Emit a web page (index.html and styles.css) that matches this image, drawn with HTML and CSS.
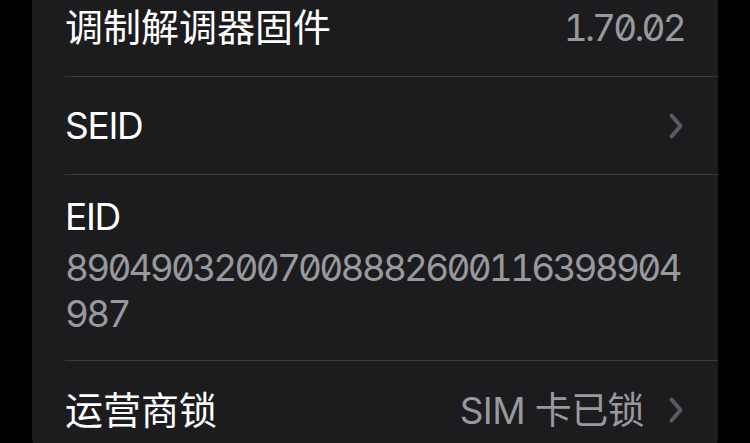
FILE: index.html
```html
<!DOCTYPE html>
<html lang="zh-CN">
<head>
<meta charset="utf-8">
<link rel="stylesheet" href="styles.css">
</head>
<body>
<div class="card">
  <div class="row row-first">
    <span class="label cjk">调制解调器固件</span>
    <span class="value num">1.70.02</span>
  </div>
  <div class="row">
    <span class="label latin">SEID</span>
    <span class="chev"><svg width="16" height="28" viewBox="0 0 16 28"><path d="M3.5 3.5 L12.5 14 L3.5 24.5" fill="none" stroke="#5a5a5f" stroke-width="4" stroke-linecap="round" stroke-linejoin="round"/></svg></span>
  </div>
  <div class="row row-stack">
    <span class="label latin">EID</span>
    <span class="value num eid">89049032007008882600116398904987</span>
  </div>
  <div class="row">
    <span class="label cjk">运营商锁</span>
    <span class="value tight">SIM 卡已锁</span>
    <span class="chev chev-gap"><svg width="16" height="28" viewBox="0 0 16 28"><path d="M3.5 3.5 L12.5 14 L3.5 24.5" fill="none" stroke="#5a5a5f" stroke-width="4" stroke-linecap="round" stroke-linejoin="round"/></svg></span>
  </div>
</div>
</body>
</html>
```

FILE: styles.css
```css
html, body {
  margin: 0;
  padding: 0;
  background: #000;
  height: 100%;
  overflow: hidden;
}
body {
  font-family: Inter, "Noto Sans CJK SC", sans-serif;
  color: #fff;
}
.card {
  margin-left: 32px;
  width: 686px;
  background: #1c1c1e;
  border-radius: 0 0 22px 22px;
  padding-left: 33px;
  box-sizing: border-box;
  min-height: 470px;
}
.row {
  display: flex;
  align-items: center;
  height: 98px;
  padding-right: 34px;
  border-bottom: 1px solid #3a3a3c;
  box-sizing: border-box;
}
.row:last-child {
  border-bottom: none;
}
.row-first {
  margin-top: -22px;
  height: 99px;
}
.label {
  font-size: 37px;
  line-height: 1;
  flex: 1;
}
.cjk {
  font-size: 38px;
}
.latin {
  letter-spacing: -1.3px;
}
.value {
  font-size: 37px;
  line-height: 1;
  color: #98989f;
}
.tight {
  letter-spacing: -0.6px;
}
.num {
  font-feature-settings: "tnum" 1, "zero" 1;
  letter-spacing: -2.8px;
}
.chev {
  display: flex;
  align-items: center;
  height: 28px;
}
.chev-gap {
  margin-left: 24px;
}
.row-stack {
  flex-direction: column;
  align-items: flex-start;
  justify-content: flex-start;
  height: 186px;
  padding-top: 19px;
}
.row-stack .label {
  flex: none;
  line-height: 46px;
  margin-bottom: 5px;
}
.eid {
  word-break: break-all;
  line-height: 46px;
  width: 100%;
}
```
